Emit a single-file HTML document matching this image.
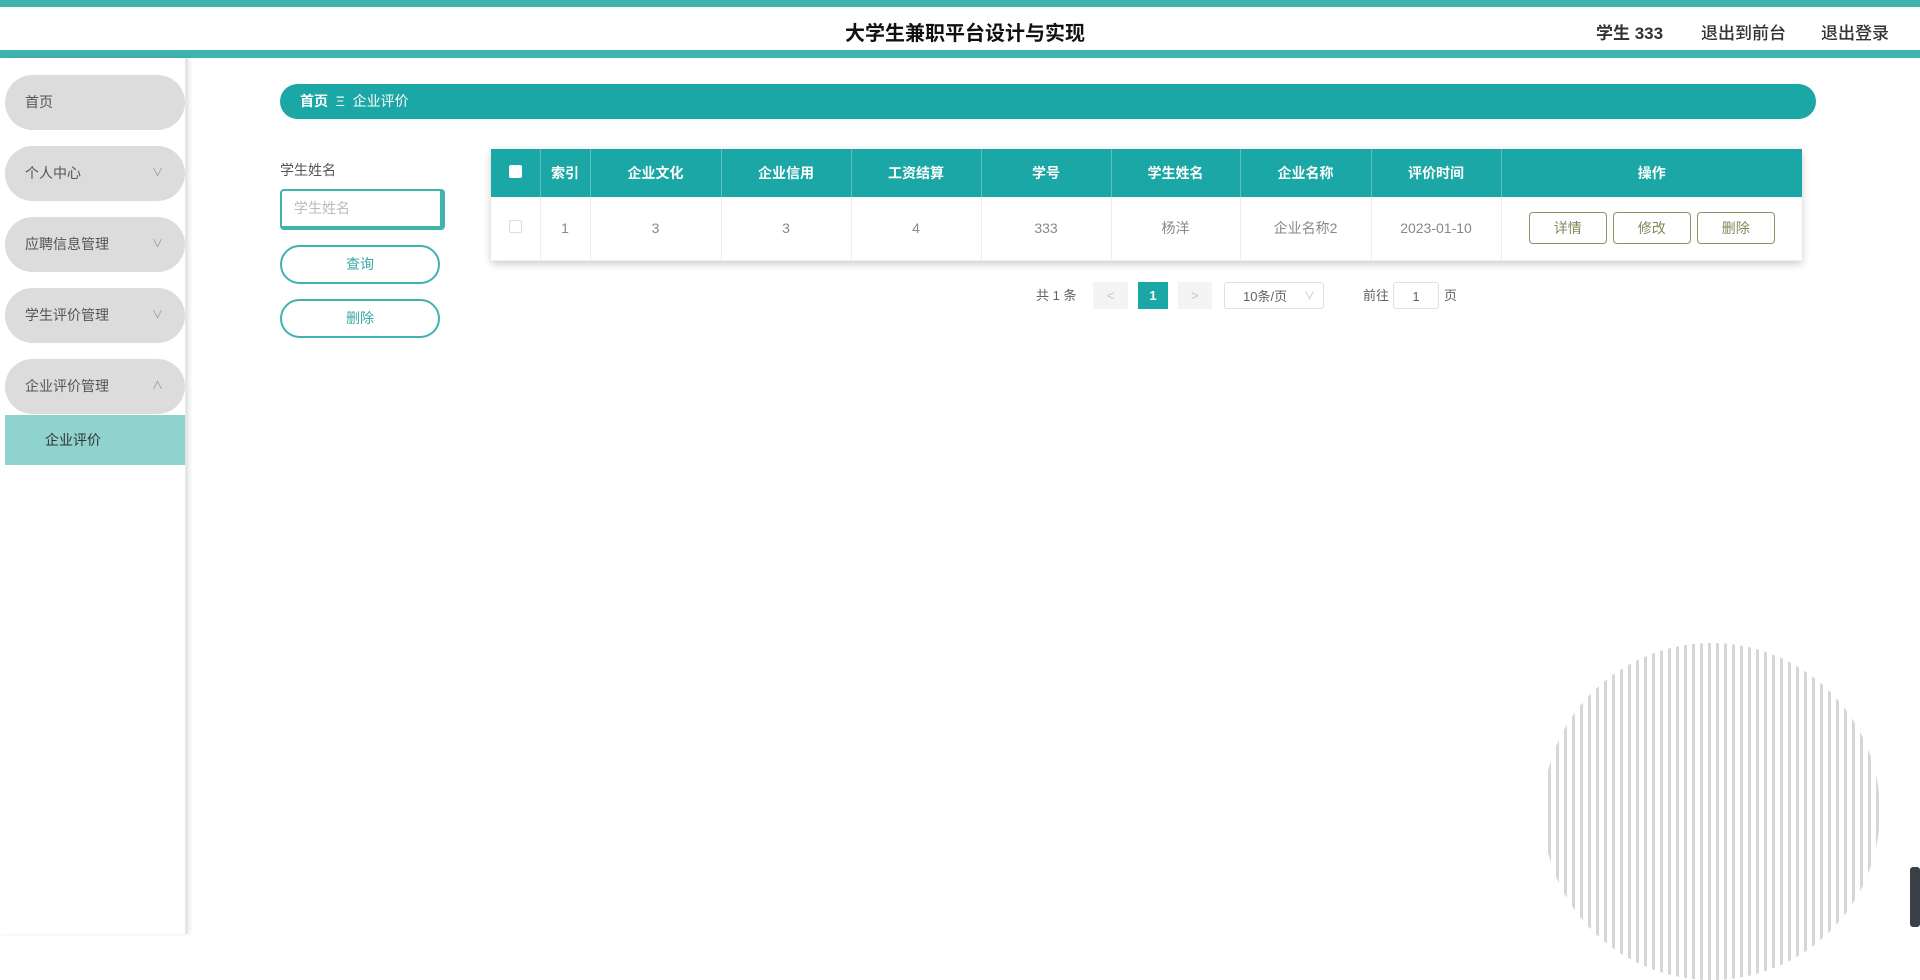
<!DOCTYPE html>
<html><head><meta charset="utf-8"><style>
*{margin:0;padding:0;box-sizing:border-box}
body{width:1920px;height:934px;overflow:hidden;background:#fff;font-family:"Liberation Sans","Noto Sans CJK SC",sans-serif;position:relative;color:#606266}
.abs{position:absolute}
.top{left:0;top:0;width:1920px;height:7px;background:#3fb3ad}
.band{left:0;top:50px;width:1920px;height:8px;background:#3fb3ad}
.title{left:0;width:1930px;top:17px;text-align:center;font-size:20px;font-weight:bold;color:#111}
.rt{top:19px;font-size:17px;color:#333;font-weight:500}
.side{left:0;top:58px;width:188px;height:876px;background:#fff;border-right:3px solid #e6e6e6;box-shadow:2px 0 4px rgba(0,0,0,.08)}
.mi{left:5px;width:180px;height:55px;border-radius:28px;background:#dcdcdc;font-size:14px;color:#555;padding-left:20px;line-height:55px}
.mi i{position:absolute;right:22px;top:0;font-style:normal;font-size:11px;color:#999}
.sub{left:5px;top:415px;width:180px;height:50px;background:#8fd3cf;font-size:14px;color:#333;line-height:50px;padding-left:40px}
.bc{left:280px;top:84px;width:1536px;height:35px;border-radius:18px;background:#1ba7a6;color:#fff;font-size:14px;line-height:35px;padding-left:20px}
.btn{left:280px;width:160px;height:39px;border:2px solid #3fb3ad;border-radius:20px;text-align:center;line-height:35px;font-size:14px;color:#3aa9a3}
table{border-collapse:collapse;position:absolute;left:491px;top:149px;width:1311px;box-shadow:0 3px 8px rgba(0,0,0,.2);font-size:14px}
th{background:#1ba7a6;color:#fff;height:48px;border-right:1px solid #5dc2bf;font-weight:bold}
td{height:63px;text-align:center;color:#888;border-right:1px solid #eee;border-bottom:1px solid #eee}
.ob{display:inline-block;width:78px;height:32px;line-height:30px;border:1px solid #8a9466;color:#7f8a5a;border-radius:4px;margin:0 3px;font-size:14px}
.pg{top:282px;height:27px;font-size:13px;line-height:27px;color:#606266}
.circle{left:1543px;top:643px;width:337px;height:337px;border-radius:50%;background:repeating-linear-gradient(90deg,#fff 0 5px,#d6d6d6 5px 8px)}
</style></head><body>
<div class="abs top"></div>
<div class="abs title">大学生兼职平台设计与实现</div>
<div class="abs rt" style="left:1596px;font-weight:bold">学生 333</div>
<div class="abs rt" style="left:1701px">退出到前台</div>
<div class="abs rt" style="left:1821px">退出登录</div>
<div class="abs band"></div>
<div class="abs side"></div>
<div class="abs mi" style="top:75px">首页</div>
<div class="abs mi" style="top:146px">个人中心<i>∨</i></div>
<div class="abs mi" style="top:217px">应聘信息管理<i>∨</i></div>
<div class="abs mi" style="top:288px">学生评价管理<i>∨</i></div>
<div class="abs mi" style="top:359px">企业评价管理<i>∧</i></div>
<div class="abs sub">企业评价</div>
<div class="abs bc"><b>首页</b>&nbsp;&nbsp;Ξ&nbsp;&nbsp;企业评价</div>
<div class="abs" style="left:280px;top:160px;font-size:14px;color:#555">学生姓名</div>
<div class="abs" style="left:280px;top:189px;width:165px;height:41px;border:2px solid #3fb3ad;border-right-width:5px;border-bottom-width:4px;border-radius:4px;font-size:14px;color:#bbb;line-height:35px;padding-left:12px">学生姓名</div>
<div class="abs btn" style="top:245px">查询</div>
<div class="abs btn" style="top:299px">删除</div>
<table>
<tr><th style="width:49px"><span style="display:inline-block;width:13px;height:13px;background:#fff;border-radius:2px"></span></th><th style="width:50px">索引</th><th style="width:131px">企业文化</th><th style="width:130px">企业信用</th><th style="width:130px">工资结算</th><th style="width:130px">学号</th><th style="width:129px">学生姓名</th><th style="width:131px">企业名称</th><th style="width:130px">评价时间</th><th style="border-right:none">操作</th></tr>
<tr><td><span style="display:inline-block;width:13px;height:13px;border:1px solid #ddd;border-radius:2px"></span></td><td>1</td><td>3</td><td>3</td><td>4</td><td>333</td><td>杨洋</td><td>企业名称2</td><td>2023-01-10</td><td style="border-right:none"><span class="ob">详情</span><span class="ob">修改</span><span class="ob">删除</span></td></tr>
</table>
<div class="abs pg" style="left:1036px">共 1 条</div>
<div class="abs pg" style="left:1093px;width:35px;background:#f4f4f5;text-align:center;color:#c0c4cc">&lt;</div>
<div class="abs pg" style="left:1138px;width:30px;background:#1ba7a6;text-align:center;color:#fff;font-weight:bold">1</div>
<div class="abs pg" style="left:1178px;width:34px;background:#f4f4f5;text-align:center;color:#c0c4cc">&gt;</div>
<div class="abs pg" style="left:1224px;width:100px;border:1px solid #dcdfe6;border-radius:3px;padding-left:18px">10条/页<span style="position:absolute;right:8px;color:#c0c4cc;font-size:11px">∨</span></div>
<div class="abs pg" style="left:1363px">前往</div>
<div class="abs pg" style="left:1393px;width:46px;border:1px solid #dcdfe6;border-radius:3px;text-align:center">1</div>
<div class="abs pg" style="left:1444px">页</div>
<div class="abs circle"></div>
<div class="abs" style="left:1910px;top:867px;width:10px;height:60px;background:#3a4048;border-radius:3px"></div>
</body></html>
